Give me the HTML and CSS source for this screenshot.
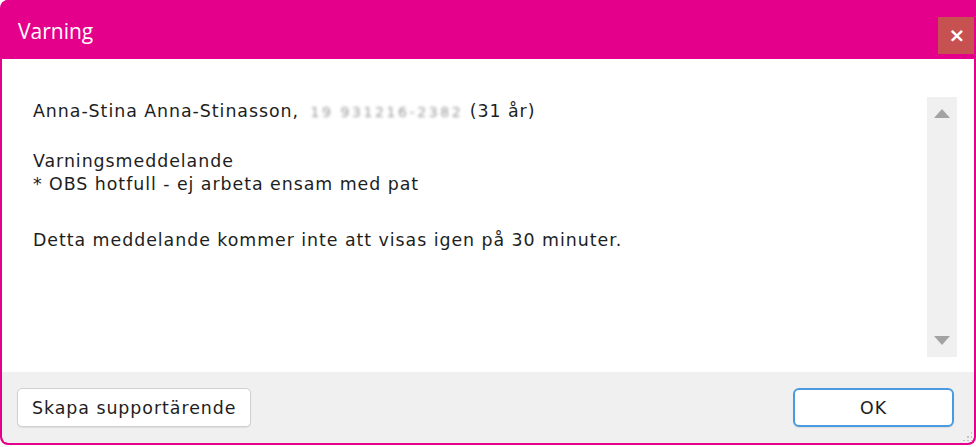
FILE: index.html
```html
<!DOCTYPE html>
<html lang="sv">
<head>
  <meta charset="UTF-8">
  <title>Varning</title>
  <link rel="stylesheet" href="styles.css">
</head>
<body>
  <div class="window">
    <div class="titlebar">
      <span class="title">Varning</span>
      <button class="close">&times;</button>
    </div>
    <div class="content">
      <div class="message">
        <p>Anna-Stina Anna-Stinasson, <span class="blur">19 931216-2382</span> (31 år)</p>
        <p>Varningsmeddelande<br>* OBS hotfull - ej arbeta ensam med pat</p>
        <p>Detta meddelande kommer inte att visas igen på 30 minuter.</p>
      </div>
      <div class="scrollbar">
        <span class="arrow up"></span>
        <span class="arrow down"></span>
      </div>
    </div>
    <div class="footer">
      <button class="btn">Skapa supportärende</button>
      <button class="btn ok">OK</button>
      <span class="grip"></span>
    </div>
  </div>
</body>
</html>
```

FILE: styles.css
```css
body {
  margin: 0;
  background: #fff;
  font-family: "DejaVu Sans", sans-serif;
}
.window {
  width: 976px;
  height: 445px;
  box-sizing: border-box;
  border: 2px solid #e4008b;
  border-top: none;
  border-radius: 8px 0 8px 8px;
  background: #e4008b;
  display: flex;
  flex-direction: column;
  overflow: hidden;
}
.titlebar {
  height: 59px;
  flex: none;
  display: flex;
  align-items: flex-start;
  justify-content: space-between;
  background: #e4008b;
  margin: 0 -2px;
}
.title {
  color: #fff;
  font-family: "Open Sans", sans-serif;
  font-size: 21px;
  margin: 17px 0 0 18px;
}
.close {
  margin-top: 17px;
  width: 38px;
  height: 37px;
  border: none;
  background: #c75050;
  color: #fff;
  font-size: 20px;
  font-weight: bold;
  line-height: 37px;
  padding: 0;
  font-family: "DejaVu Sans", sans-serif;
}
.content {
  flex: 1;
  background: #fff;
  display: flex;
  padding: 38px 17px 15px 31px;
}
.message {
  flex: 1;
  color: #1e1e1e;
  font-size: 17.4px;
  letter-spacing: 0.95px;
  line-height: 23px;
  padding-top: 3px;
}
.message p {
  margin: 0 0 26px;
}
.message p + p {
  margin-bottom: 33px;
}
.blur {
  color: #9a9a9a;
  filter: blur(1.4px);
  font-size: 14px;
  letter-spacing: 2.6px;
  margin-left: 5px;
}
.scrollbar {
  width: 30px;
  background: #f0f0f0;
  display: flex;
  flex-direction: column;
  justify-content: space-between;
  align-items: center;
  padding: 12px 0;
}
.arrow {
  width: 0;
  height: 0;
  border-left: 8px solid transparent;
  border-right: 8px solid transparent;
}
.arrow.up {
  border-bottom: 9px solid #a3a3a3;
}
.arrow.down {
  border-top: 9px solid #a3a3a3;
}
.footer {
  height: 71px;
  flex: none;
  background: #f0f0f0;
  display: flex;
  align-items: center;
  justify-content: space-between;
  padding: 0 20px 0 15px;
  position: relative;
  border-radius: 0 0 6px 6px;
}
.btn {
  height: 39px;
  background: #fff;
  border: 1px solid #d0d0d0;
  border-radius: 5px;
  font-family: "DejaVu Sans", sans-serif;
  font-size: 17.4px;
  letter-spacing: 0.95px;
  color: #1e1e1e;
  padding: 0 14px;
  box-shadow: 0 1px 1px rgba(0,0,0,0.08);
}
.btn.ok {
  width: 161px;
  border: 2px solid #4a9ae2;
  border-radius: 6px;
}
.grip {
  position: absolute;
  right: 2px;
  bottom: 2px;
  width: 10px;
  height: 10px;
  background:
    radial-gradient(circle, #c4c4c4 1.2px, transparent 1.4px) 0 0 / 4px 4px;
  clip-path: polygon(100% 0, 100% 100%, 0 100%);
}
```
